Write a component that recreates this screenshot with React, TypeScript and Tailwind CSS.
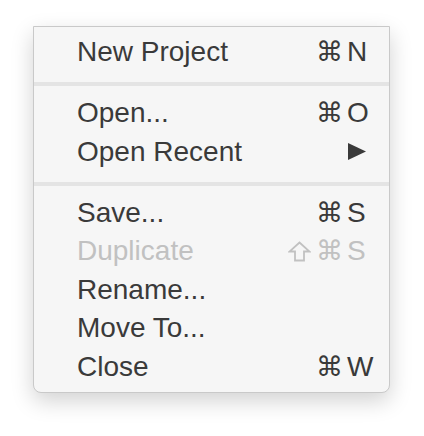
import React from "react";

type Item = {
  label: string;
  shift?: boolean;
  cmd?: boolean;
  keyChar?: string;
  submenu?: boolean;
  disabled?: boolean;
};

const groups: Item[][] = [
  [{ label: "New Project", cmd: true, keyChar: "N" }],
  [
    { label: "Open...", cmd: true, keyChar: "O" },
    { label: "Open Recent", submenu: true },
  ],
  [
    { label: "Save...", cmd: true, keyChar: "S" },
    { label: "Duplicate", shift: true, cmd: true, keyChar: "S", disabled: true },
    { label: "Rename..." },
    { label: "Move To..." },
    { label: "Close", cmd: true, keyChar: "W" },
  ],
];

function ShiftIcon() {
  return (
    <svg width="23" height="21" viewBox="0 0 23 21" className="mr-[5px]" aria-label="⇧">
      <path
        d="M11.5 1.5 L21.5 10.5 L16 10.5 L16 19.5 L7 19.5 L7 10.5 L1.5 10.5 Z"
        fill="none"
        stroke="currentColor"
        strokeWidth="1.8"
        strokeLinejoin="miter"
      />
    </svg>
  );
}

function Row({ item }: { item: Item }) {
  const color = item.disabled ? "text-[#c1c1c1]" : "text-[#3a3a3a]";
  return (
    <div className={`flex items-center h-[38.5px] pl-[43px] pr-[13px] ${color}`}>
      <span className="flex-1 text-[28px] leading-[38.5px] whitespace-nowrap">{item.label}</span>
      <span className="w-[70px] flex justify-end items-center leading-[38.5px] whitespace-nowrap font-['DejaVu_Sans',sans-serif]">
        {item.shift && <ShiftIcon />}
        {item.cmd && <span className="text-[27px] leading-[38.5px]">⌘</span>}
      </span>
      <span className="w-[33px] flex items-center text-[28px] leading-[38.5px] pl-[4px]">
        {item.submenu ? (
          <svg width="18" height="17" viewBox="0 0 18 17" className="ml-[1px]">
            <polygon points="0,0 18,8.5 0,17" fill="#3a3a3a" />
          </svg>
        ) : (
          item.keyChar ?? ""
        )}
      </span>
    </div>
  );
}

export default function App() {
  return (
    <div className="w-[424px] h-[436px] bg-white pt-[26px] pl-[33px] font-['Liberation_Sans',Arial,sans-serif]">
      <div className="w-[357px] bg-[#f6f6f6] border border-[#c9c9c9] rounded-b-[8px] py-[6px] shadow-[0_8px_22px_rgba(0,0,0,0.18)]">
        {groups.map((g, gi) => (
          <React.Fragment key={gi}>
            {gi > 0 && <div className="h-[4px] bg-[#e4e4e4] mt-[10.5px] mb-[8px]" />}
            {g.map((it) => (
              <Row key={it.label} item={it} />
            ))}
          </React.Fragment>
        ))}
      </div>
    </div>
  );
}
